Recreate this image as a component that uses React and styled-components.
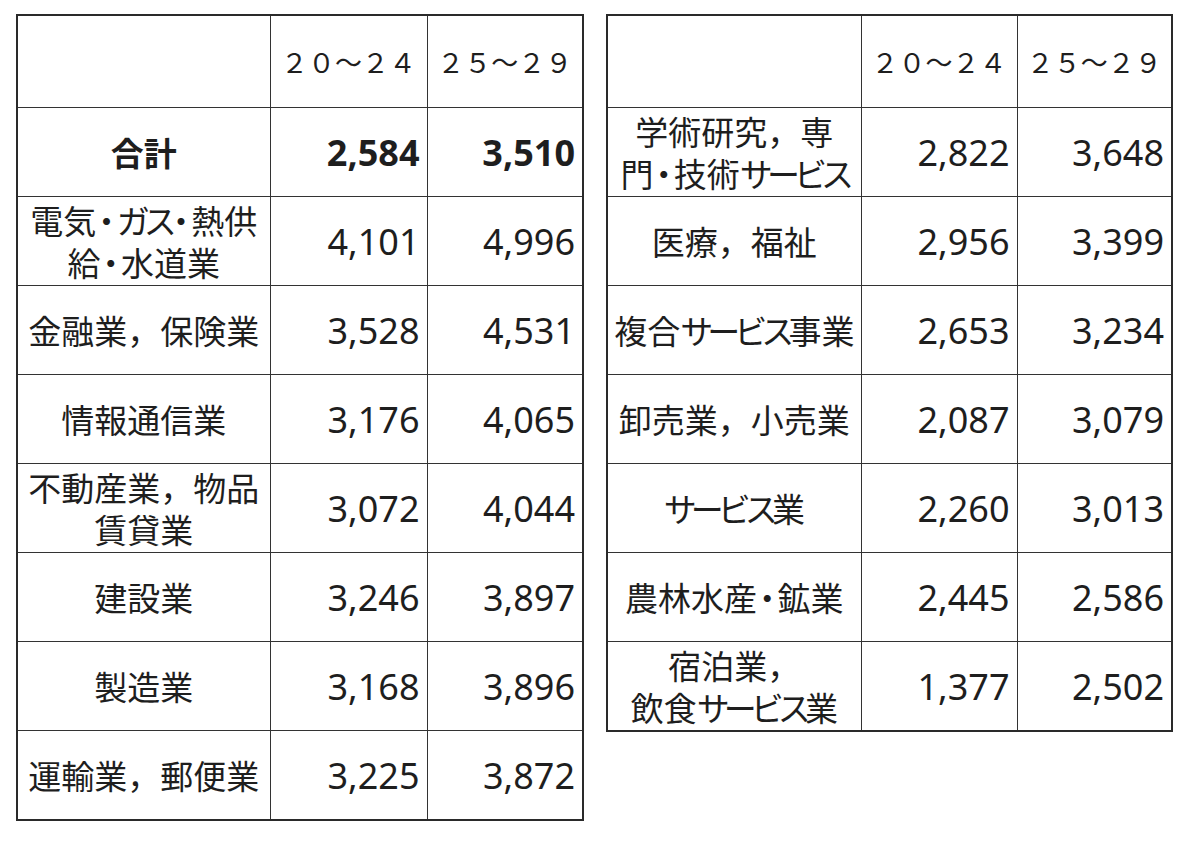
import styled, { createGlobalStyle } from 'styled-components'

const GlobalStyle = createGlobalStyle`
  body {
    margin: 0;
    background: #ffffff;
    color: #1e1e1e;
    font-family: "Noto Sans CJK JP", "Noto Sans", sans-serif;
  }
`

const Page = styled.div`
  display: flex;
  align-items: flex-start;
  gap: 22px;
  padding: 14px 0 0 16px;
`

const Table = styled.table`
  border-collapse: collapse;
  table-layout: fixed;
  width: ${props => props.$width}px;
  border: 2px solid #2a2a2a;
`

const HeadCell = styled.th`
  height: 91px;
  padding: 0;
  border: 1px solid #333333;
  font-family: "Noto Sans CJK JP", sans-serif;
  font-size: 27px;
  font-weight: 400;
  text-align: center;
  vertical-align: middle;
  color: #1e1e1e;
`

const LabelCell = styled.td`
  height: 88px;
  padding: 0 2px;
  border: 1px solid #333333;
  font-family: "Noto Sans CJK JP", sans-serif;
  font-size: 33px;
  line-height: 42px;
  font-weight: ${props => (props.$bold ? 700 : 400)};
  text-align: center;
  vertical-align: middle;
  white-space: nowrap;
`

const NumberCell = styled.td`
  padding: 0 7px 0 0;
  border: 1px solid #333333;
  font-family: "Noto Sans", sans-serif;
  font-size: 36px;
  font-weight: ${props => (props.$bold ? 700 : 400)};
  text-align: right;
  vertical-align: middle;
`

const Kana = styled.span`
  letter-spacing: -0.18em;
`

const Dot = styled.span`
  font-feature-settings: "palt";
  padding: 0 0.06em;
`

const leftRows = [
  { label: '合計', a: '2,584', b: '3,510', bold: true },
  { label: '電気・ガス・熱供\n給・水道業', a: '4,101', b: '4,996' },
  { label: '金融業，保険業', a: '3,528', b: '4,531' },
  { label: '情報通信業', a: '3,176', b: '4,065' },
  { label: '不動産業，物品\n賃貸業', a: '3,072', b: '4,044' },
  { label: '建設業', a: '3,246', b: '3,897' },
  { label: '製造業', a: '3,168', b: '3,896' },
  { label: '運輸業，郵便業', a: '3,225', b: '3,872' },
]

const rightRows = [
  { label: '学術研究，専\n門・技術サービス', a: '2,822', b: '3,648' },
  { label: '医療，福祉', a: '2,956', b: '3,399' },
  { label: '複合サービス事業', a: '2,653', b: '3,234' },
  { label: '卸売業，小売業', a: '2,087', b: '3,079' },
  { label: 'サービス業', a: '2,260', b: '3,013' },
  { label: '農林水産・鉱業', a: '2,445', b: '2,586' },
  { label: '宿泊業，\n飲食サービス業', a: '1,377', b: '2,502' },
]

// katakana runs are set tighter and the middle dot narrower, like Meiryo UI
const renderLine = line =>
  line.split(/([ァ-ヶー]+|・)/).filter(Boolean).map((part, i) => {
    if (part === '・') return <Dot key={i}>・</Dot>
    if (/^[ァ-ヶー]+$/.test(part)) return <Kana key={i}>{part}</Kana>
    return part
  })

const Label = ({ text }) =>
  text.split('\n').map((line, i) => <div key={i}>{renderLine(line)}</div>)

const WageTable = ({ rows, width, cols }) => (
  <Table $width={width}>
    <colgroup>
      {cols.map((w, i) => <col key={i} style={{ width: w }} />)}
    </colgroup>
    <thead>
      <tr>
        <HeadCell />
        <HeadCell>２０～２４</HeadCell>
        <HeadCell>２５～２９</HeadCell>
      </tr>
    </thead>
    <tbody>
      {rows.map(row => (
        <tr key={row.label}>
          <LabelCell $bold={row.bold}><Label text={row.label} /></LabelCell>
          <NumberCell $bold={row.bold}>{row.a}</NumberCell>
          <NumberCell $bold={row.bold}>{row.b}</NumberCell>
        </tr>
      ))}
    </tbody>
  </Table>
)

const App = () => (
  <>
    <GlobalStyle />
    <Page>
      <WageTable rows={leftRows} width={566} cols={[253, 157, 156]} />
      <WageTable rows={rightRows} width={565} cols={[254, 156, 155]} />
    </Page>
  </>
)

export default App
